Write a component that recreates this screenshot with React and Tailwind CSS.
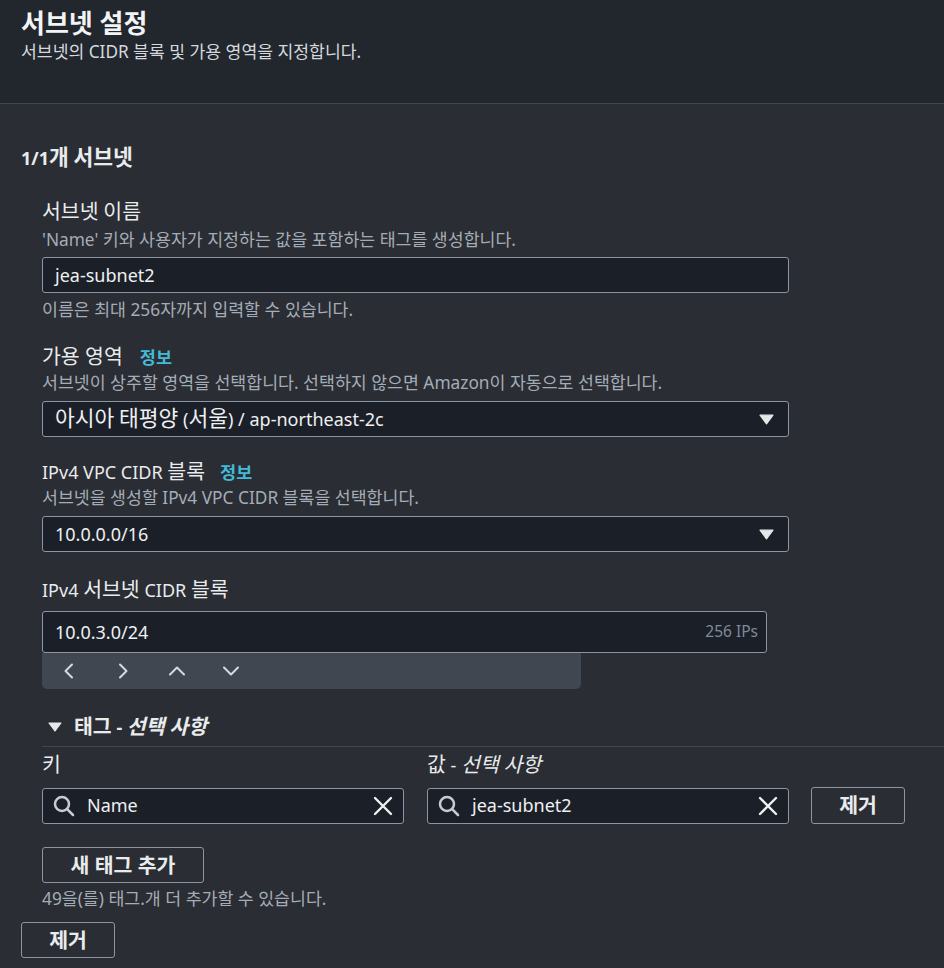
import React from 'react';

const font = { fontFamily: '"Noto Sans", "Noto Sans CJK KR", sans-serif' };

// Hangul runs are drawn a bit larger than the Latin around them, as in the console.
const K = ({ children, k }) =>
  String(children)
    .split(/([\u3131-\uD79D]+)/)
    .map((p, i) => (/[\u3131-\uD79D]/.test(p) ? <span key={i} className={k}>{p}</span> : p));

const Caret = ({ className = '' }) => (
  <svg viewBox="0 0 14 10" className={className}>
    <path d="M1 1 L13 1 L7 9 Z" fill="currentColor" stroke="currentColor" strokeWidth="1.2" strokeLinejoin="round" />
  </svg>
);

const SearchIcon = () => (
  <svg width="22" height="22" viewBox="0 0 22 22" fill="none" stroke="#c7ccd3" strokeWidth="2.5" strokeLinecap="round">
    <circle cx="9" cy="9" r="7" />
    <path d="M14.2 14.2 L20 20" />
  </svg>
);

const ClearIcon = () => (
  <svg width="20" height="20" viewBox="0 0 20 20" fill="none" stroke="#eef0f2" strokeWidth="2.4" strokeLinecap="round">
    <path d="M2 2 L18 18 M18 2 L2 18" />
  </svg>
);

const Chev = ({ d }) => (
  <svg width="16" height="16" viewBox="0 0 16 16" fill="none" stroke="#d6dade" strokeWidth="2" strokeLinecap="round" strokeLinejoin="round">
    <path d={d} />
  </svg>
);

const Info = ({ ml }) => <span className={`${ml} text-[17.5px] leading-none font-bold text-[#44b9d6]`}>정보</span>;

const Label = ({ children, className = '' }) => (
  <div className={`text-[18px] leading-[26px] ${className}`}>
    <K k="text-[20.5px] leading-none">{children}</K>
  </div>
);

const Desc = ({ children, className = '' }) => (
  <div className={`text-[17.3px] leading-[20px] text-[#a4acb7] ${className}`}>{children}</div>
);

const Select = ({ value }) => (
  <div className="mt-2 flex h-9 w-[747px] items-center justify-between rounded-[3px] border border-[#8c96a3] bg-[#1b1f28] pl-3 pr-[14px] text-[18px] leading-[24px] text-[#eef0f2]">
    <span><K k="text-[21.5px] leading-none">{value}</K></span>
    <Caret className="h-[11px] w-[15px] text-[#e6e8ea]" />
  </div>
);

const TagInput = ({ value }) => (
  <div className="flex h-9 w-[362px] items-center rounded-[3px] border border-[#8c96a3] bg-[#1b1f28] pl-[10px] pr-[10px] text-[18px] text-[#eef0f2]">
    <SearchIcon />
    <span className="ml-[12px] flex-1">{value}</span>
    <ClearIcon />
  </div>
);

const Btn = ({ children, className = '' }) => (
  <button className={`flex h-9 items-center justify-center rounded-[3px] border border-[#8c96a3] text-[20.5px] leading-none font-bold text-[#e9ebed] ${className}`}>
    {children}
  </button>
);

export default function App() {
  return (
    <div style={font} className="min-h-[968px] w-[944px] overflow-hidden bg-[#2a2d33] text-[#e9ebed]">
      {/* header */}
      <div className="border-b border-[#41464f] bg-[#22262d] px-[21px] pt-[4px] pb-[41px]">
        <h1 className="text-[26px] font-bold leading-[38px] text-[#f2f3f4]">서브넷 설정</h1>
        <p className="text-[17.2px] leading-[20px] text-[#d5d9de]">서브넷의 CIDR 블록 및 가용 영역을 지정합니다.</p>
      </div>

      <div className="px-[21px]">
        <h2 className="mt-[41px] text-[18px] font-bold leading-[26px]">
          <K k="text-[21.5px] leading-none">1/1개 서브넷</K>
        </h2>

        <div className="pl-[21px]">
          {/* subnet name */}
          <Label className="mt-[28px]">서브넷 이름</Label>
          <Desc className="mt-[5px]">'Name' 키와 사용자가 지정하는 값을 포함하는 태그를 생성합니다.</Desc>
          <div className="mt-[7px] flex h-9 w-[747px] items-center rounded-[3px] border border-[#8c96a3] bg-[#1b1f28] px-3 text-[18px] text-[#eef0f2]">jea-subnet2</div>
          <Desc className="mt-[7px]">이름은 최대 256자까지 입력할 수 있습니다.</Desc>

          {/* AZ */}
          <div className="mt-[23px] flex items-baseline text-[18px] leading-[26px]">
            <span className="text-[20.5px]">가용 영역</span>
            <Info ml="ml-[17px]" />
          </div>
          <Desc className="mt-[4px]">서브넷이 상주할 영역을 선택합니다. 선택하지 않으면 Amazon이 자동으로 선택합니다.</Desc>
          <Select value="아시아 태평양 (서울) / ap-northeast-2c" />

          {/* VPC CIDR */}
          <div className="mt-[22px] flex items-baseline text-[18px] leading-[26px]">
            <span>IPv4 VPC CIDR <span className="text-[20.5px] leading-none">블록</span></span>
            <Info ml="ml-[15px]" />
          </div>
          <Desc className="mt-[3px]">서브넷을 생성할 IPv4 VPC CIDR 블록을 선택합니다.</Desc>
          <Select value="10.0.0.0/16" />

          {/* subnet CIDR */}
          <Label className="mt-[25px]">IPv4 서브넷 CIDR 블록</Label>
          <div className="mt-2 flex h-[42px] w-[725px] items-center justify-between rounded-[3px] border border-[#8c96a3] bg-[#1b1f28] pl-3 pr-[8px]">
            <span className="text-[18px] text-[#eef0f2]">10.0.3.0/24</span>
            <span className="text-[15.5px] text-[#7f8a98]">256 IPs</span>
          </div>
          <div className="flex h-9 w-[539px] items-center gap-[38px] rounded-b-[5px] bg-[#414750] pl-[19px]">
            <Chev d="M11 1.5 L4.5 8 L11 14.5" />
            <Chev d="M5 1.5 L11.5 8 L5 14.5" />
            <Chev d="M1 11.5 L8 4.5 L15 11.5" />
            <Chev d="M1 4.5 L8 11.5 L15 4.5" />
          </div>

          {/* tags */}
          <div className="-mr-[21px] mt-[25px] border-b border-[#41464f] pb-[6px]">
            <div className="flex h-[26px] items-center text-[18px] font-bold leading-[26px]">
              <Caret className="ml-[6px] mr-[12px] h-[10px] w-[14px] text-[#e6e8ea]" />
              <span>
                <K k="text-[20.5px] leading-none">태그 - </K>
                <i><K k="text-[20.5px] leading-none">선택 사항</K></i>
              </span>
            </div>
          </div>

          <div className="mt-[6px] flex h-[24px] gap-[23px] text-[18px] leading-[24px]">
            <div className="w-[362px]"><span className="text-[20.5px] leading-none">키</span></div>
            <div className="w-[362px]">
              <K k="text-[20.5px] leading-none">값 - </K>
              <i><K k="text-[20.5px] leading-none">선택 사항</K></i>
            </div>
          </div>
          <div className="mt-[10px] flex items-center">
            <TagInput value="Name" />
            <div className="ml-[23px]"><TagInput value="jea-subnet2" /></div>
            <Btn className="ml-[22px] h-[37px] w-[94px]">제거</Btn>
          </div>

          <Btn className="mt-[23px] w-[162px]">새 태그 추가</Btn>
          <Desc className="mt-[6px]">49을(를) 태그.개 더 추가할 수 있습니다.</Desc>
        </div>

        <Btn className="mt-[13px] w-[94px]">제거</Btn>
      </div>
    </div>
  );
}
